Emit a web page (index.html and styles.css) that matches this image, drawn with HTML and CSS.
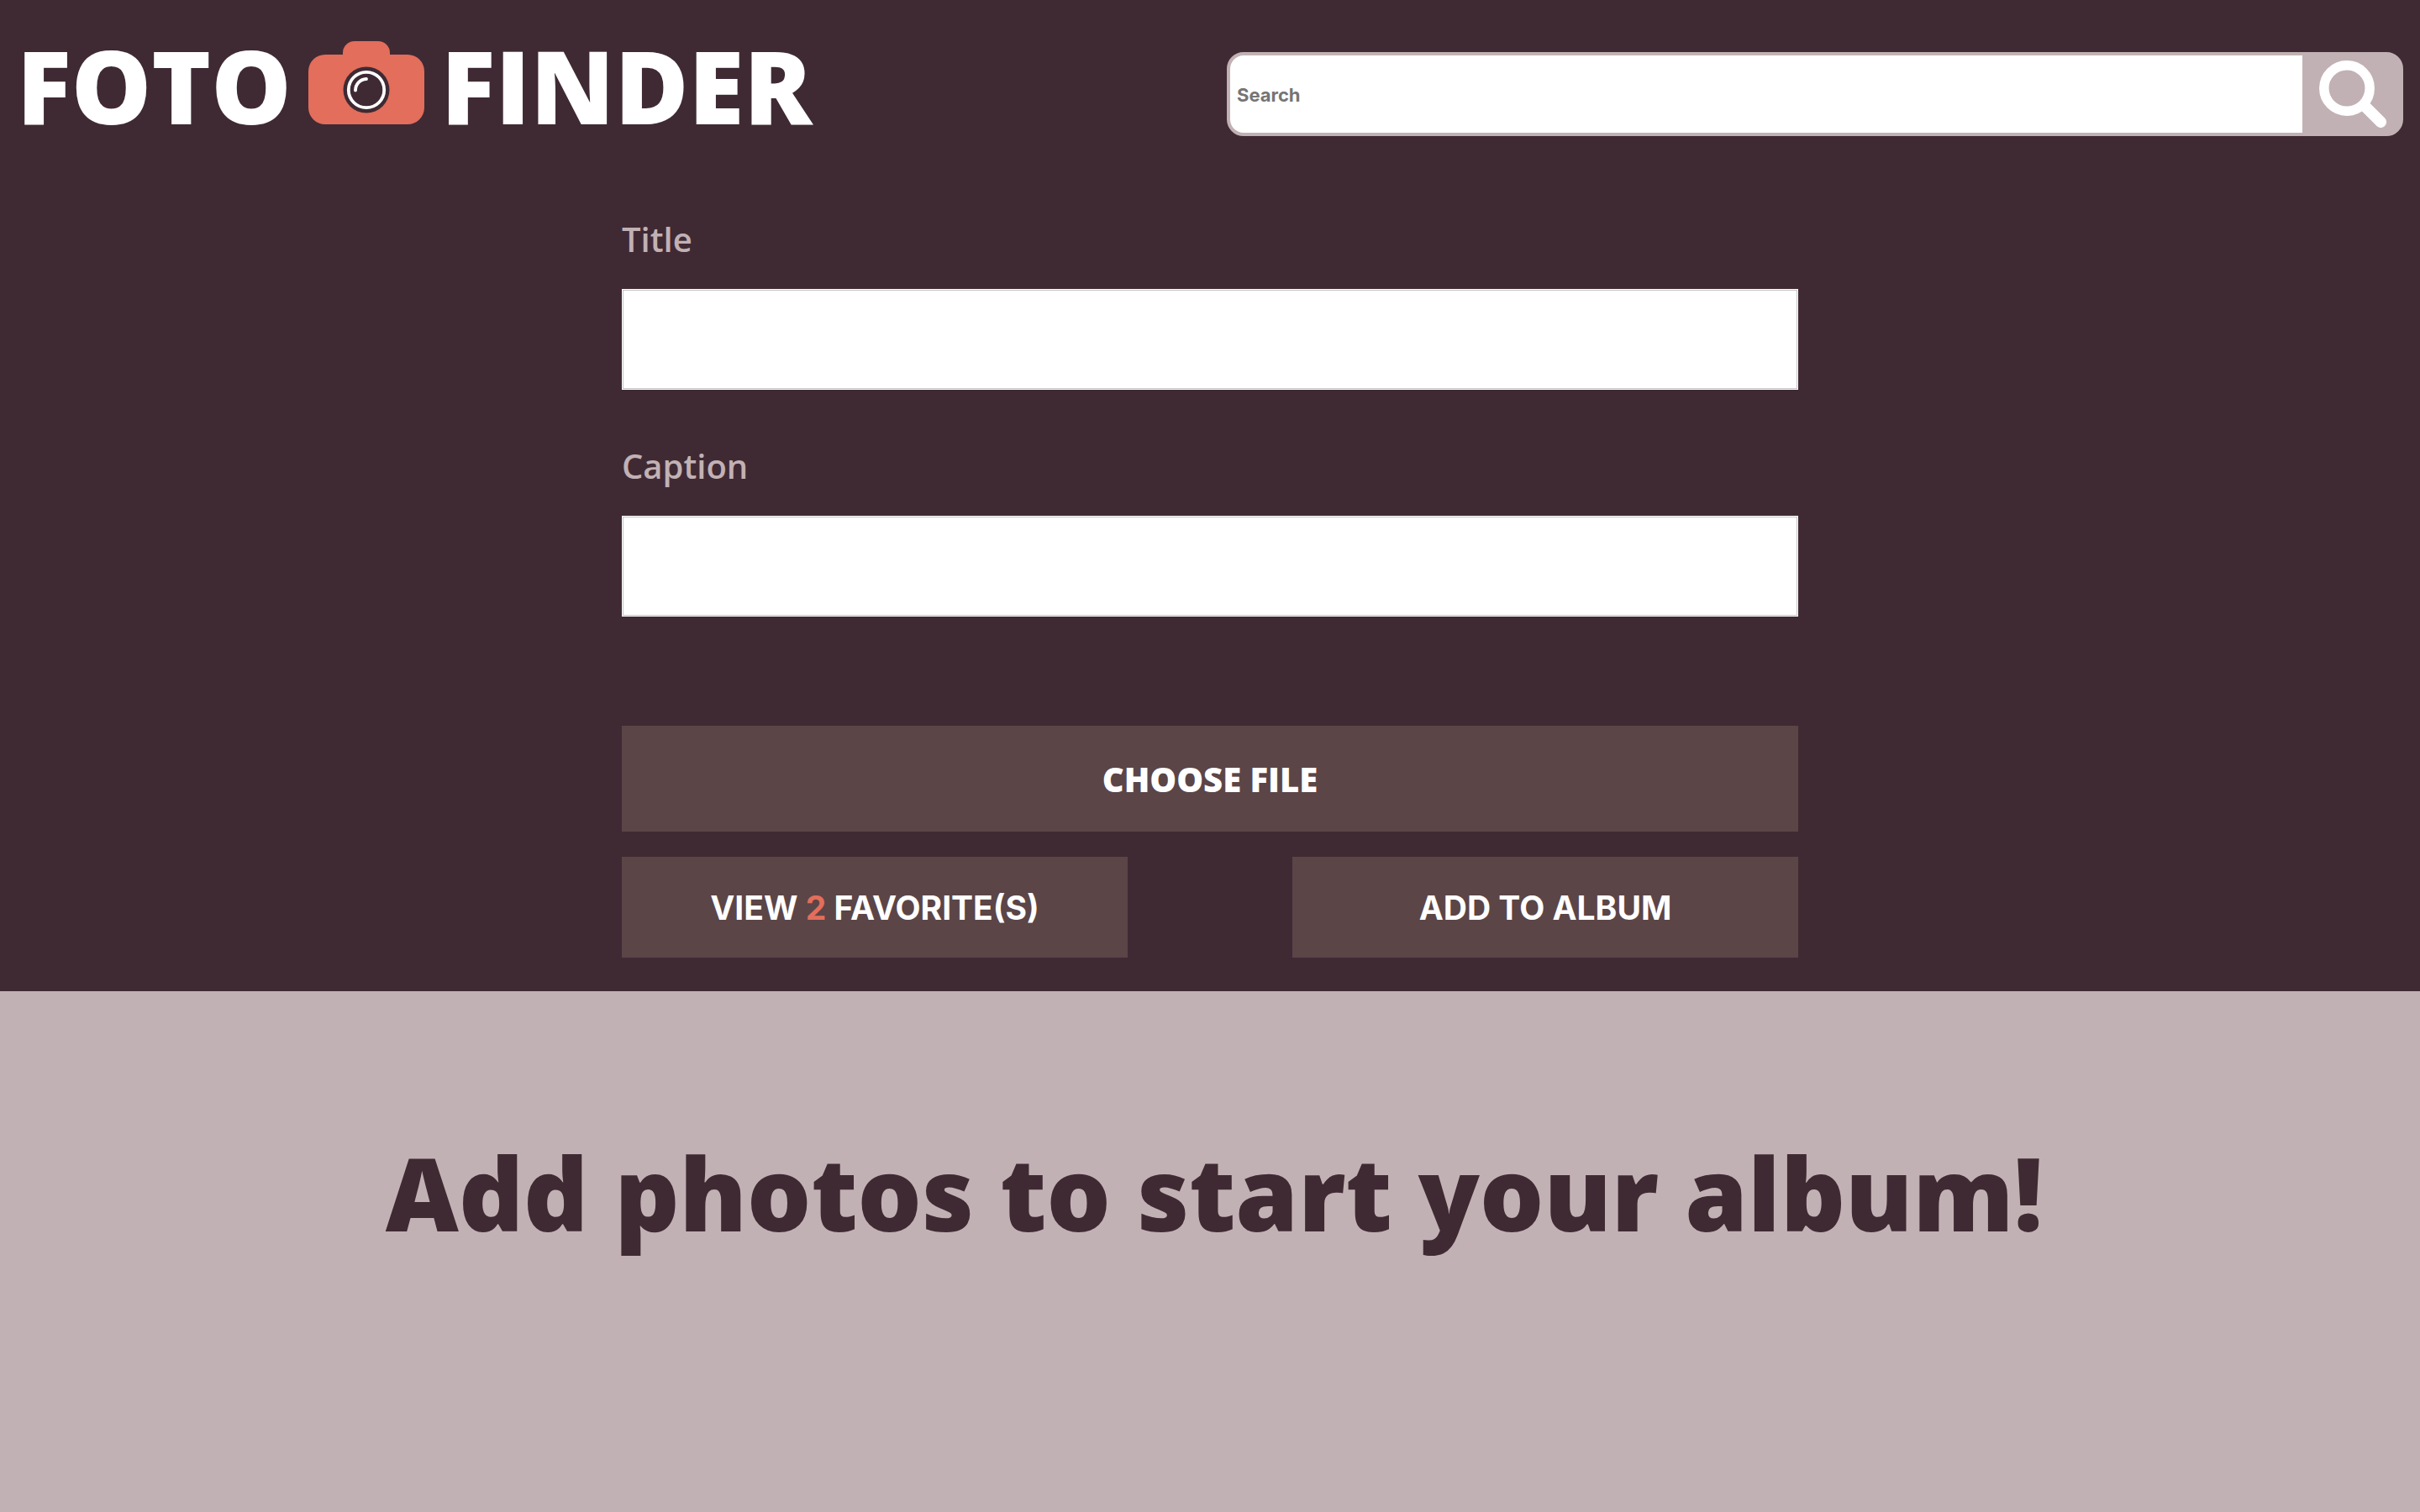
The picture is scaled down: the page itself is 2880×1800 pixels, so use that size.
FILE: index.html
```html
<!DOCTYPE html>
<html lang="en">
<head>
  <meta charset="utf-8">
  <title>Foto Finder</title>
  <link rel="stylesheet" href="styles.css">
</head>
<body>
  <header class="top">
    <div class="bar">
      <h1 class="logo">
        <span>FOTO</span>
        <svg class="camera" viewBox="0 0 138 100" aria-hidden="true">
          <path class="camera-body" d="M20 16H41V14A14 14 0 0 1 55 0H83A14 14 0 0 1 97 14V16H118A20 20 0 0 1 138 36V79A20 20 0 0 1 118 99H20A20 20 0 0 1 0 79V36A20 20 0 0 1 20 16Z"/>
          <circle class="camera-lens" cx="69" cy="58" r="27.5"/>
          <circle class="camera-ring" cx="69" cy="58" r="21.2"/>
          <path class="camera-glint" d="M56 58.5A13.5 13.5 0 0 1 69 45"/>
        </svg>
        <span>FINDER</span>
      </h1>
      <form class="search" role="search">
        <input class="search-input" type="search" placeholder="Search" aria-label="Search">
        <button class="search-button" type="button" aria-label="Search photos">
          <svg class="magnifier" viewBox="0 0 80 80" aria-hidden="true">
            <circle cx="33" cy="33" r="27.2" stroke-width="11.5"/>
            <path d="M54 54L73.3 73.3" stroke-width="13.5"/>
          </svg>
        </button>
      </form>
    </div>
    <form class="photo-form">
      <label class="label" for="title">Title</label>
      <input class="field" id="title" type="text">
      <label class="label" for="caption">Caption</label>
      <input class="field" id="caption" type="text">
      <button class="button choose" type="button">CHOOSE FILE</button>
      <div class="actions">
        <button class="button" type="button">VIEW <span class="count">2</span> FAVORITE(S)</button>
        <button class="button" type="button">ADD TO ALBUM</button>
      </div>
    </form>
  </header>
  <main class="album">
    <h2 class="message">Add photos to start your album!</h2>
  </main>
</body>
</html>
```
FILE: styles.css
```css
* {
  box-sizing: border-box;
}

body {
  margin: 0;
  min-height: 100vh;
  background: #c2b1b4;
  font-family: "Open Sans", sans-serif;
}

.top {
  padding: 20px 20px 40px;
  background: #3f2a34;
}

.bar {
  display: flex;
  justify-content: space-between;
  align-items: flex-start;
}

.logo {
  display: flex;
  gap: 20px;
  margin: 0;
  color: #fff;
  font-size: 120px;
  font-weight: 800;
  line-height: 164px;
}

.camera {
  width: 138px;
  height: 100px;
  margin-top: 29px;
}

.camera-body {
  fill: #e26e5b;
}

.camera-lens {
  fill: #3f2a34;
}

.camera-ring {
  fill: none;
  stroke: #fff;
  stroke-width: 3.8;
}

.camera-glint {
  fill: none;
  stroke: #fff;
  stroke-width: 3.8;
  stroke-linecap: round;
}

.search {
  display: flex;
  width: 1400px;
  height: 100px;
  margin-top: 42px;
  border: 4px solid #c2b1b4;
  border-radius: 20px;
  background: #c2b1b4;
}

.search-input {
  flex: 1;
  min-width: 0;
  padding: 2px 8px 0;
  border: 0;
  border-radius: 16px 0 0 16px;
  background: #fff;
  font: 700 22px Inter, sans-serif;
}

.search-input::placeholder {
  color: #757575;
}

.search-button {
  display: flex;
  justify-content: center;
  align-items: flex-start;
  width: 116px;
  padding: 6px 0 0 4px;
  border: 0;
  background: none;
}

.magnifier {
  width: 80px;
  height: 80px;
  fill: none;
  stroke: #fff;
  stroke-linecap: round;
}

.photo-form {
  display: flex;
  flex-direction: column;
  width: 1400px;
  margin: 0 auto;
  padding-top: 10px;
}

.label {
  margin-top: 64px;
  color: #c2b1b4;
  font-size: 40px;
  font-weight: 600;
  line-height: 54px;
}

.field {
  height: 120px;
  margin-top: 32px;
  padding: 0 20px;
  border: 1px solid #fff;
  outline: 1px solid #c4c4c4;
  outline-offset: -2px;
  background: #fff;
  font: 600 40px "Open Sans", sans-serif;
}

.button {
  height: 120px;
  padding: 0;
  border: 0;
  background: #5b4547;
  color: #fff;
  font: 700 39px Inter, sans-serif;
}

.choose {
  height: 126px;
  margin-top: 130px;
  font: 800 40px "Open Sans", sans-serif;
}

.actions {
  display: flex;
  justify-content: space-between;
  margin-top: 30px;
}

.actions .button {
  width: 43%;
}

.count {
  color: #e26e5b;
}

.message {
  margin: 0;
  padding: 158px 20px 158px 30px;
  color: #3f2a34;
  font-size: 120px;
  font-weight: 800;
  line-height: 164px;
  text-align: center;
}
```
